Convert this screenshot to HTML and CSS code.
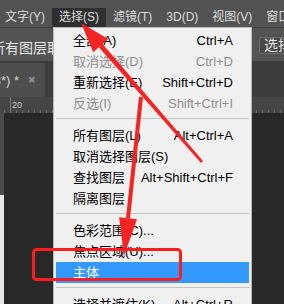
FILE: index.html
```html
<!DOCTYPE html>
<html>
<head>
    <link rel="stylesheet" href="styles.css">
</head>
<body>
    <div class="screen">
        <div class="menubar">
            <div class="item">文字(Y)</div>
            <div class="item active">选择(S)</div>
            <div class="item">滤镜(T)</div>
            <div class="item">3D(D)</div>
            <div class="item">视图(V)</div>
            <div class="item">窗口(W)</div>
        </div>

        <div class="optionsbar">
            <div class="opt-text">所有图层取样</div>
            <div class="opt-btn">选择主体</div>
        </div>

        <div class="tabs">
            <div class="tab">
                <span class="tab-name">(RGB/8*) *</span>
                <span class="tab-close">&#x2716;</span>
            </div>
        </div>

        <div class="ruler">
            <span class="ruler-num">20</span>
        </div>

        <div class="canvas">
            <div class="vruler"></div>
        </div>

        <!-- dropdown of the Select menu -->
        <div class="menu">
            <div class="mi"><span>全部(A)</span><span>Ctrl+A</span></div>
            <div class="mi off"><span>取消选择(D)</span><span>Ctrl+D</span></div>
            <div class="mi"><span>重新选择(E)</span><span>Shift+Ctrl+D</span></div>
            <div class="mi off"><span>反选(I)</span><span>Shift+Ctrl+I</span></div>
            <div class="sep"></div>
            <div class="mi"><span>所有图层(L)</span><span>Alt+Ctrl+A</span></div>
            <div class="mi"><span>取消选择图层(S)</span><span></span></div>
            <div class="mi"><span>查找图层</span><span>Alt+Shift+Ctrl+F</span></div>
            <div class="mi"><span>隔离图层</span><span></span></div>
            <div class="sep"></div>
            <div class="mi"><span>色彩范围(C)...</span><span></span></div>
            <div class="mi"><span>焦点区域(U)...</span><span></span></div>
            <div class="mi hl"><span>主体</span><span></span></div>
            <div class="sep"></div>
            <div class="mi"><span>选择并遮住(K)...</span><span>Alt+Ctrl+R</span></div>
        </div>

        <!-- red annotation drawn over the screenshot -->
        <svg class="marks" width="284" height="304" viewBox="0 0 284 304">
            <polygon points="81,23 108.2,39 93.2,52.2" />
            <polygon points="102.6,44 98.8,47.2 201,162.9 203,161.1" />
            <polygon points="143,97.2 139,96.8 126,218 130,218.4" />
            <polygon points="124,256 137,219.2 119.1,217.3" />
            <rect x="33.5" y="249.5" width="147" height="30" rx="3" />
        </svg>
    </div>
</body>
</html>
```

FILE: styles.css
```css
body {
    margin: 0;
    background-color: #282828;
    overflow: hidden;
}
.screen {
    position: relative;
    width: 284px;
    height: 304px;
    overflow: hidden;
    background-color: #282828;
    font-family: "Liberation Sans", "Noto Sans CJK SC", sans-serif;
}
.menubar {
    height: 27px;
    display: flex;
    align-items: flex-end;
    background-color: #535353;
    white-space: nowrap;
    overflow: hidden;
}
.menubar .item {
    height: 19px;
    line-height: 19px;
    padding: 0 7px;
    font-size: 12px;
    color: #dcdcdc;
    flex-shrink: 0;
}
.menubar .item:first-child {
    margin-left: -2px;
}
.menubar .item.active {
    background-color: #2f2f2f;
}
.optionsbar {
    height: 28px;
    padding-top: 5px;
    border-top: 1px solid #3e3e3e;
    display: flex;
    align-items: center;
    background-color: #535353;
    overflow: hidden;
    white-space: nowrap;
}
.opt-text {
    flex: 0 0 268px;
    margin-left: -9px;
    font-size: 14px;
    color: #e6e6e6;
}
.opt-btn {
    flex-shrink: 0;
    height: 15px;
    line-height: 15px;
    padding: 0 4px;
    margin-top: -3px;
    border: 1px solid #6c6c6c;
    border-radius: 2px;
    background-color: #484848;
    font-size: 14px;
    color: #e6e6e6;
}
.tabs {
    height: 34px;
    padding-top: 2px;
    display: flex;
    background-color: #3c3c3c;
}
.tab {
    width: 45px;
    display: flex;
    justify-content: flex-end;
    align-items: center;
    padding-right: 9px;
    box-sizing: border-box;
    overflow: hidden;
    white-space: nowrap;
    background-color: #4e4e4e;
}
.tab-name {
    flex-shrink: 0;
    font-size: 13px;
    color: #d4d4d4;
}
.tab-close {
    flex-shrink: 0;
    margin-left: 9px;
    font-size: 9px;
    color: #8e8e8e;
}
.ruler {
    position: relative;
    height: 16px;
    background-color: #454545;
    background-image: repeating-linear-gradient(90deg, #6a6a6a 0 1px, transparent 1px 6px);
    background-size: 100% 3px;
    background-position: 4px bottom;
    background-repeat: no-repeat;
}
.ruler-num {
    display: block;
    margin-left: 10px;
    padding-left: 1px;
    padding-top: 4px;
    width: 20px;
    border-left: 1px solid #7a7a7a;
    height: 12px;
    font-size: 9px;
    line-height: 9px;
    color: #c8c8c8;
}
.canvas {
    height: 191px;
    background-color: #282828;
}
.vruler {
    width: 4px;
    height: 100%;
    background: linear-gradient(#4a4a4a 0 82px, #e6e6e6 82px);
}
.menu {
    position: absolute;
    left: 53px;
    top: 27px;
    width: 199px;
    box-sizing: border-box;
    padding: 2px;
    border: 1px solid #b9b9b9;
    background-color: #f0f0f0;
}
.mi {
    height: 21px;
    line-height: 21px;
    padding: 0 16px 0 17px;
    display: flex;
    justify-content: space-between;
    font-size: 13px;
    color: #000;
    white-space: nowrap;
}
.mi.off {
    color: #8f8f8f;
}
.mi.hl {
    background-color: #3399ff;
    color: #fff;
}
.sep {
    height: 11px;
    padding-top: 4px;
    box-sizing: border-box;
}
.sep::before {
    content: "";
    display: block;
    height: 1px;
    background-color: #c5c5c5;
}
.marks {
    position: absolute;
    left: 0;
    top: 0;
    pointer-events: none;
}
.marks polygon {
    fill: #f42424;
}
.marks rect {
    fill: none;
    stroke: #ff1c1c;
    stroke-width: 3;
}
```
